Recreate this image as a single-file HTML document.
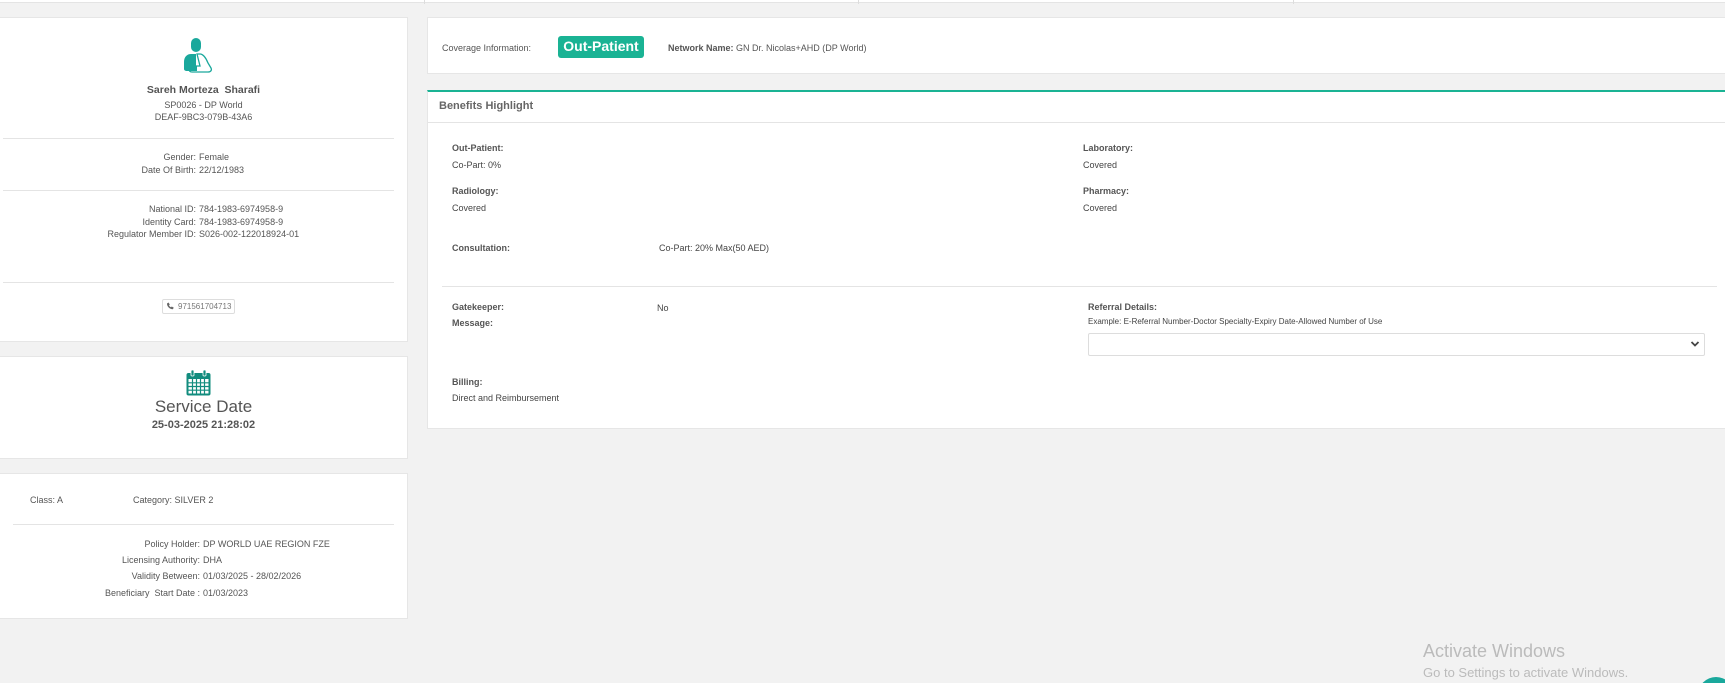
<!DOCTYPE html>
<html><head><meta charset="utf-8"><style>
*{margin:0;padding:0;box-sizing:border-box}
html,body{width:1725px;height:683px;overflow:hidden;background:#f2f2f2}
body{font-family:"Liberation Sans",Arial,sans-serif;color:#444;font-size:9px}
#w{position:relative;width:1725px;height:683px;overflow:hidden}
.a{position:absolute;white-space:nowrap}
.card{position:absolute;background:#fff;border:1px solid #e6e6e6}
b{font-weight:bold;color:#555}
.c{text-align:center;left:0;width:407px}
.hr{position:absolute;height:1px;background:#e4e4e4}
</style></head><body><div id="w">
<div class="a" style="left:0;top:0;width:1725px;height:3px;background:#fff;border-bottom:1px solid #e4e4e4"></div>
<div class="a" style="left:424px;top:0;width:1px;height:4px;background:#ddd"></div>
<div class="a" style="left:858px;top:0;width:1px;height:4px;background:#ddd"></div>
<div class="a" style="left:1293px;top:0;width:1px;height:4px;background:#ddd"></div>

<div class="card" style="left:-2px;top:17px;width:410px;height:325px"></div>
<svg class="a" style="left:181px;top:37px" width="36" height="38" viewBox="0 0 36 38">
<rect x="10" y="1" width="10" height="14" rx="5" fill="#1aa89c"/>
<path d="M15 17h-5c-4 0-7 3-7 8v7c0 1 1 2 3 2h5v-4h4z" fill="#1aa89c"/>
<path d="M16 17h3c3 0 6 4 8 9l3 5c1 2 0 4-3 4h-16c-2 0-3-1-3-3s1-3 3-3h8z" fill="none" stroke="#1aa89c" stroke-width="1.3"/>
<rect x="11" y="29.5" width="5" height="4.5" fill="#1aa89c"/>
</svg>
<div class="a c" style="top:84px;font-size:10.5px;font-weight:bold;color:#555">Sareh Morteza&nbsp; Sharafi</div>
<div class="a c" style="top:100px;color:#555">SP0026 - DP World</div>
<div class="a c" style="top:112px;color:#555">DEAF-9BC3-079B-43A6</div>
<div class="hr" style="left:3px;top:138px;width:391px"></div>
<div class="a" style="left:0;top:152px;width:196px;text-align:right;color:#555">Gender:</div><div class="a" style="left:199px;top:152px;color:#555">Female</div>
<div class="a" style="left:0;top:165px;width:196px;text-align:right;color:#555">Date Of Birth:</div><div class="a" style="left:199px;top:165px;color:#555">22/12/1983</div>
<div class="hr" style="left:3px;top:190px;width:391px"></div>
<div class="a" style="left:0;top:204px;width:196px;text-align:right;color:#555">National ID:</div><div class="a" style="left:199px;top:204px;color:#555">784-1983-6974958-9</div>
<div class="a" style="left:0;top:217px;width:196px;text-align:right;color:#555">Identity Card:</div><div class="a" style="left:199px;top:217px;color:#555">784-1983-6974958-9</div>
<div class="a" style="left:0;top:229px;width:196px;text-align:right;color:#555">Regulator Member ID:</div><div class="a" style="left:199px;top:229px;color:#555">S026-002-122018924-01</div>
<div class="hr" style="left:3px;top:282px;width:391px"></div>
<div class="a" style="left:162px;top:299px;width:73px;height:15px;border:1px solid #ddd;border-radius:2px;font-size:8px;color:#777;padding:2px 0 0 15px">971561704713</div>
<svg class="a" style="left:166px;top:302px" width="8" height="8" viewBox="0 0 8 8"><path d="M1 1.5l1.5-1 1.3 2-0.8 0.8c0.4 1 1 1.6 2 2l0.8-0.8 2 1.3-1 1.5c-3 0-6-3-5.8-5.8z" fill="#666"/></svg>

<div class="card" style="left:-2px;top:356px;width:410px;height:103px"></div>
<svg class="a" style="left:186px;top:370px" width="25" height="26" viewBox="0 0 25 26">
<rect x="0.5" y="3" width="24" height="22.5" rx="2" fill="#128c7e"/>
<rect x="5" y="0" width="3" height="6" rx="1" fill="#128c7e" stroke="#fff" stroke-width="0.8"/>
<rect x="17" y="0" width="3" height="6" rx="1" fill="#128c7e" stroke="#fff" stroke-width="0.8"/>
<rect x="2.5" y="9" width="20" height="14.5" fill="#fff"/>
<g stroke="#128c7e" stroke-width="1.2"><path d="M2.5 12.8h20M2.5 16.5h20M2.5 20.2h20M6.5 9v15M10.5 9v15M14.5 9v15M18.5 9v15"/></g>
</svg>
<div class="a c" style="top:397px;font-size:17px;color:#555">Service Date</div>
<div class="a c" style="top:419px;font-size:11px;font-weight:bold;color:#555">25-03-2025 21:28:02</div>

<div class="card" style="left:-2px;top:473px;width:410px;height:146px"></div>
<div class="a" style="left:30px;top:495px;color:#555">Class: A</div>
<div class="a" style="left:133px;top:495px;color:#555">Category: SILVER 2</div>
<div class="hr" style="left:13px;top:524px;width:381px"></div>
<div class="a" style="left:0;top:539px;width:200px;text-align:right;color:#555">Policy Holder:</div><div class="a" style="left:203px;top:539px;color:#555">DP WORLD UAE REGION FZE</div>
<div class="a" style="left:0;top:555px;width:200px;text-align:right;color:#555">Licensing Authority:</div><div class="a" style="left:203px;top:555px;color:#555">DHA</div>
<div class="a" style="left:0;top:571px;width:200px;text-align:right;color:#555">Validity Between:</div><div class="a" style="left:203px;top:571px;color:#555">01/03/2025 - 28/02/2026</div>
<div class="a" style="left:0;top:588px;width:200px;text-align:right;color:#555">Beneficiary&nbsp; Start Date :</div><div class="a" style="left:203px;top:588px;color:#555">01/03/2023</div>

<div class="card" style="left:427px;top:17px;width:1300px;height:57px"></div>
<div class="a" style="left:442px;top:43px;color:#555">Coverage Information:</div>
<div class="a" style="left:558px;top:36px;width:86px;height:22px;background:#1ab394;border-radius:3px;color:#fff;font-size:14px;font-weight:bold;text-align:center;line-height:21px">Out-Patient</div>
<div class="a" style="left:668px;top:43px;color:#555"><b>Network Name:</b> GN Dr. Nicolas+AHD (DP World)</div>

<div class="card" style="left:427px;top:90px;width:1300px;height:339px;border-top:2px solid #1ab394"></div>
<div class="a" style="left:439px;top:100px;font-size:11px;font-weight:bold;color:#666">Benefits Highlight</div>
<div class="hr" style="left:428px;top:122px;width:1297px"></div>
<div class="a" style="left:452px;top:143px"><b>Out-Patient:</b></div>
<div class="a" style="left:452px;top:160px">Co-Part: 0%</div>
<div class="a" style="left:452px;top:186px"><b>Radiology:</b></div>
<div class="a" style="left:452px;top:203px">Covered</div>
<div class="a" style="left:452px;top:243px"><b>Consultation:</b></div>
<div class="a" style="left:659px;top:243px">Co-Part: 20% Max(50 AED)</div>
<div class="a" style="left:1083px;top:143px"><b>Laboratory:</b></div>
<div class="a" style="left:1083px;top:160px">Covered</div>
<div class="a" style="left:1083px;top:186px"><b>Pharmacy:</b></div>
<div class="a" style="left:1083px;top:203px">Covered</div>
<div class="hr" style="left:442px;top:286px;width:1275px"></div>
<div class="a" style="left:452px;top:302px"><b>Gatekeeper:</b></div>
<div class="a" style="left:452px;top:318px"><b>Message:</b></div>
<div class="a" style="left:657px;top:303px">No</div>
<div class="a" style="left:1088px;top:302px"><b>Referral Details:</b></div>
<div class="a" style="left:1088px;top:317px;font-size:8px">Example: E-Referral Number-Doctor Specialty-Expiry Date-Allowed Number of Use</div>
<div class="a" style="left:1088px;top:333px;width:617px;height:23px;border:1px solid #ddd;border-radius:2px"></div>
<svg class="a" style="left:1690px;top:340px" width="10" height="8" viewBox="0 0 10 8"><path d="M1.5 2l3.5 3.5 3.5-3.5" fill="none" stroke="#444" stroke-width="1.8"/></svg>
<div class="a" style="left:452px;top:377px"><b>Billing:</b></div>
<div class="a" style="left:452px;top:393px">Direct and Reimbursement</div>

<div class="a" style="left:1423px;top:641px;font-size:18px;color:#bbb">Activate Windows</div>
<div class="a" style="left:1423px;top:665px;font-size:13px;color:#bbb">Go to Settings to activate Windows.</div>
<div class="a" style="left:1698px;top:677px;width:36px;height:36px;border-radius:50%;background:#1aa89c"></div>
</div></body></html>
